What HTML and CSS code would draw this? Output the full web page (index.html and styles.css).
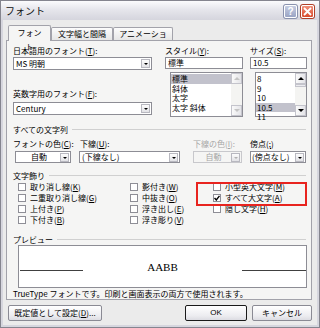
FILE: index.html
```html
<!DOCTYPE html>
<html lang="ja">
<head>
    <meta charset="UTF-8">
    <title>フォント</title>
    <link rel="stylesheet" href="styles.css">
</head>
<body>
    <div class="window">
        <!-- Title bar -->
        <div class="titlebar">
            <span class="title">フォント</span>
            <div class="caption">
                <span class="cap-btn help">?</span>
                <span class="cap-btn close">
                    <svg width="9" height="9" viewBox="0 0 9 9"><path d="M1 1L8 8M8 1L1 8" stroke="#fff" stroke-width="1.8"/></svg>
                </span>
            </div>
        </div>

        <div class="client">
            <!-- Tabs -->
            <div class="tabs">
                <div class="tab active">フォント</div>
                <div class="tab">文字幅と間隔</div>
                <div class="tab">アニメーション</div>
            </div>

            <div class="panel">
                <!-- Font / style / size -->
                <div class="top-row">
                    <div class="col-font">
                        <div class="label">日本語用のフォント(<u>T</u>):</div>
                        <div class="combo">MS 明朝<span class="drop"></span></div>
                        <div class="label label-gap">英数字用のフォント(<u>F</u>):</div>
                        <div class="combo">Century<span class="drop"></span></div>
                    </div>
                    <div class="col-style">
                        <div class="label">スタイル(<u>Y</u>):</div>
                        <div class="edit">標準</div>
                        <div class="listbox list-style">
                            <div class="items">
                                <div class="item selected">標準</div>
                                <div class="item">斜体</div>
                                <div class="item">太字</div>
                                <div class="item">太字 斜体</div>
                            </div>
                            <div class="vscroll disabled">
                                <span class="sbtn up"></span>
                                <span class="track"></span>
                                <span class="sbtn down"></span>
                            </div>
                        </div>
                    </div>
                    <div class="col-size">
                        <div class="label">サイズ(<u>S</u>):</div>
                        <div class="edit">10.5</div>
                        <div class="listbox list-size">
                            <div class="items">
                                <div class="item">8</div>
                                <div class="item">9</div>
                                <div class="item">10</div>
                                <div class="item selected">10.5</div>
                                <div class="item">11</div>
                            </div>
                            <div class="vscroll">
                                <span class="sbtn up"></span>
                                <span class="thumb"></span>
                                <span class="track"></span>
                                <span class="sbtn down"></span>
                            </div>
                        </div>
                    </div>
                </div>

                <!-- All text -->
                <div class="group-head">すべての文字列</div>
                <div class="select-row">
                    <div class="field f-color">
                        <div class="label">フォントの色(<u>C</u>):</div>
                        <div class="combo combo-color">自動<span class="drop"></span></div>
                    </div>
                    <div class="field f-under">
                        <div class="label">下線(<u>U</u>):</div>
                        <div class="combo combo-under">(下線なし)<span class="drop"></span></div>
                    </div>
                    <div class="field f-ucolor">
                        <div class="label disabled">下線の色(<u>I</u>):</div>
                        <div class="combo combo-ucolor disabled">自動<span class="drop"></span></div>
                    </div>
                    <div class="field f-emph">
                        <div class="label">傍点(<u>;</u>)</div>
                        <div class="combo combo-emph">(傍点なし)<span class="drop"></span></div>
                    </div>
                </div>

                <!-- Effects -->
                <div class="group-head">文字飾り</div>
                <div class="checks">
                    <div class="check-col col1">
                        <div class="check"><span class="box"></span>取り消し線(<u>K</u>)</div>
                        <div class="check"><span class="box"></span>二重取り消し線(<u>G</u>)</div>
                        <div class="check"><span class="box"></span>上付き(<u>P</u>)</div>
                        <div class="check"><span class="box"></span>下付き(<u>B</u>)</div>
                    </div>
                    <div class="check-col col2">
                        <div class="check"><span class="box"></span>影付き(<u>W</u>)</div>
                        <div class="check"><span class="box"></span>中抜き(<u>O</u>)</div>
                        <div class="check"><span class="box"></span>浮き出し(<u>E</u>)</div>
                        <div class="check"><span class="box"></span>浮き彫り(<u>V</u>)</div>
                    </div>
                    <div class="check-col col3">
                        <div class="check"><span class="box"></span>小型英大文字(<u>M</u>)</div>
                        <div class="check"><span class="box checked"><svg width="6" height="6" viewBox="0 0 6 6"><path d="M0.5 3L2.3 5L5.5 0.8" fill="none" stroke="#000" stroke-width="1.4"/></svg></span>すべて大文字(<u>A</u>)</div>
                        <div class="check"><span class="box"></span>隠し文字(<u>H</u>)</div>
                    </div>
                </div>

                <!-- Preview -->
                <div class="group-head">プレビュー</div>
                <div class="preview">
                    <span class="pline left"></span>
                    <span class="sample">AABB</span>
                    <span class="pline right"></span>
                </div>
                <div class="note">TrueType フォントです。印刷と画面表示の両方で使用されます。</div>

                <!-- annotation -->
                <div class="highlight"></div>
            </div>

            <!-- Buttons -->
            <div class="buttons">
                <div class="btn btn-default-set">既定値として設定(<u>D</u>)...</div>
                <div class="spacer"></div>
                <div class="btn btn-ok">OK</div>
                <div class="btn btn-cancel">キャンセル</div>
            </div>
        </div>
    </div>
</body>
</html>
```

FILE: styles.css
```css
* {
    margin: 0;
    padding: 0;
    box-sizing: border-box;
}

body {
    width: 320px;
    height: 328px;
    overflow: hidden;
    background: #fff;
    font-family: "Noto Sans CJK JP", "Liberation Sans", sans-serif;
    font-size: 8px;
    color: #000;
}

u {
    text-decoration: underline;
    text-underline-offset: 1px;
}

.window {
    width: 320px;
    height: 328px;
    border: 1px solid #85858f;
    background: #ebebeb;
    display: flex;
    flex-direction: column;
}

/* Title bar */
.titlebar {
    height: 19px;
    background: linear-gradient(#fbfbfd, #e6e6ec 45%, #d5d5dd);
    display: flex;
    align-items: center;
    justify-content: space-between;
    padding: 0 5px 0 4px;
}

.title {
    font-size: 10px;
    line-height: 12px;
    color: #111;
}

.caption {
    display: flex;
    gap: 4px;
    margin-top: 2px;
}

.cap-btn {
    width: 13px;
    height: 13px;
    border: 1px solid #fff;
    border-radius: 2px;
    display: flex;
    align-items: center;
    justify-content: center;
    color: #fff;
    font-family: "Liberation Sans", sans-serif;
    font-weight: bold;
    font-size: 10px;
    line-height: 10px;
}

.help {
    background: linear-gradient(#c6cde2, #9aa4c4);
    box-shadow: 0 0 0 1px #8a92ae;
}

.close {
    background: linear-gradient(#f0907a, #d94a2c);
    box-shadow: 0 0 0 1px #b04028;
}

/* Client area */
.client {
    flex: 1;
    border: 2px solid #d6d6de;
    border-top: none;
    padding: 5px 0 0 3px;
}

.tabs {
    display: flex;
    align-items: flex-end;
    height: 15px;
    padding-left: 2px;
}

.tab {
    height: 13px;
    line-height: 12px;
    border: 1px solid #a2a2aa;
    border-bottom: none;
    border-radius: 2px 2px 0 0;
    background: linear-gradient(#fcfcfc, #e6e6e6);
    padding: 0 5px;
    text-align: center;
}

.tab.active {
    width: 43px;
    height: 16px;
    line-height: 14px;
    background: #f5f5f4;
    margin-bottom: -1px;
    position: relative;
    z-index: 1;
}

.tab:nth-child(2) {
    width: 62px;
}

.tab:nth-child(3) {
    width: 60px;
}

.panel {
    position: relative;
    width: 306px;
    height: 260px;
    border: 1px solid #a2a2aa;
    background: #f5f5f4;
    padding: 4px 0 0 6px;
}

.label {
    height: 12px;
    line-height: 12px;
    white-space: nowrap;
}

.label.disabled {
    color: #a6a6a6;
}

/* Top row */
.top-row {
    display: flex;
    height: 73px;
}

.col-font {
    width: 139px;
}

.col-style {
    width: 78px;
    margin-left: 13px;
}

.col-size {
    width: 57px;
    margin-left: 7px;
}

.label-gap {
    margin-top: 18px;
}

.combo {
    position: relative;
    height: 13px;
    line-height: 11px;
    border: 1px solid #8d8d95;
    background: #fff;
    padding-left: 2px;
    white-space: nowrap;
    overflow: hidden;
}

.col-font .label-gap + .combo {
    margin-top: 2px;
}

.drop {
    position: absolute;
    right: 1px;
    top: 1px;
    width: 9px;
    height: 9px;
    background: linear-gradient(#fdfdfd, #e2e2e6);
    border: 1px solid #b8b8c0;
}

.drop::after {
    content: "";
    position: absolute;
    left: 2px;
    top: 3px;
    border-left: 2px solid transparent;
    border-right: 2px solid transparent;
    border-top: 2px solid #000;
}

.edit {
    height: 12px;
    line-height: 10px;
    border: 1px solid #8d8d95;
    background: #fff;
    padding-left: 2px;
}

.listbox {
    display: flex;
    height: 45px;
    margin-top: 3px;
    border: 1px solid #8d8d95;
    background: #fff;
}

.list-style {
    margin-left: 5px;
}

.list-size {
    margin-left: 5px;
}

.items {
    flex: 1;
    padding-top: 1px;
}

.item {
    height: 9.5px;
    line-height: 9px;
    padding-left: 1px;
    white-space: nowrap;
}

.item.selected {
    background: #c2c2cc;
}

.vscroll {
    width: 11px;
    display: flex;
    flex-direction: column;
    background: #f4f4f2;
}

.sbtn {
    position: relative;
    height: 11px;
    background: linear-gradient(90deg, #fafafa, #e4e4e8);
    border: 1px solid #c4c4cc;
}

.sbtn::after {
    content: "";
    position: absolute;
    left: 2px;
    top: 3px;
    border-left: 3px solid transparent;
    border-right: 3px solid transparent;
}

.sbtn.up::after {
    border-bottom: 3px solid #000;
}

.sbtn.down::after {
    border-top: 3px solid #000;
}

.vscroll.disabled .sbtn.up::after {
    border-bottom-color: #c4c4c4;
}

.vscroll.disabled .sbtn.down::after {
    border-top-color: #c4c4c4;
}

.thumb {
    height: 3px;
    border: 1px solid #c4c4cc;
    background: #ececf0;
}

.track {
    flex: 1;
}

/* Group headings */
.group-head {
    display: flex;
    align-items: center;
    height: 11px;
    line-height: 11px;
    width: 293px;
    margin-top: 6px;
}

.group-head::after {
    content: "";
    flex: 1;
    height: 1px;
    margin-left: 4px;
    background: #d0d0d0;
}

/* Selects row */
.select-row {
    display: flex;
    margin-top: 3px;
}

.field .combo {
    margin-top: 1px;
    height: 12px;
    line-height: 10px;
}

.f-color {
    width: 66px;
}

.combo-color {
    width: 56px;
    margin-left: 2px;
    text-align: center;
    padding-right: 10px;
}

.f-under {
    width: 114px;
}

.f-under .label {
    padding-left: 1px;
}

.combo-under {
    width: 101px;
}

.f-ucolor {
    width: 57px;
}

.combo-ucolor {
    width: 49px;
    text-align: center;
    padding-right: 10px;
}

.combo.disabled {
    background: #f5f5f4;
    border-color: #c8c8cc;
    color: #a6a6a6;
}

.combo.disabled .drop::after {
    border-top-color: #b0b0b0;
}

.f-emph {
    width: 57px;
}

.combo-emph {
    width: 56px;
    padding-left: 1px;
}

/* Checkboxes */
.checks {
    display: flex;
    padding-left: 5px;
    margin-top: 0;
}

.col1 {
    width: 112px;
}

.col2 {
    width: 83px;
}

.check {
    display: flex;
    align-items: center;
    height: 11px;
    white-space: nowrap;
}

.box {
    width: 8px;
    height: 8px;
    margin-right: 4px;
    border: 1px solid #8e8e96;
    background: #fff;
    display: flex;
    align-items: center;
    justify-content: center;
}

.checks + .group-head {
    margin-top: 9px;
}

.select-row + .group-head {
    margin-top: 7px;
}

/* Preview */
.preview {
    display: flex;
    align-items: center;
    justify-content: space-between;
    width: 289px;
    height: 43px;
    margin-left: 5px;
    border: 1px solid #8d8d95;
    background: #fff;
}

.pline {
    height: 1px;
    margin-top: 7px;
    background: #404040;
}

.pline.left {
    width: 63px;
    margin-left: 1px;
}

.pline.right {
    width: 64px;
}

.sample {
    font-family: "Liberation Serif", serif;
    font-size: 11px;
}

.note {
    height: 10px;
    line-height: 10px;
    margin-top: 1px;
    white-space: nowrap;
}

.highlight {
    position: absolute;
    left: 189px;
    top: 141px;
    width: 111px;
    height: 24px;
    border: 2px solid #e8241f;
}

/* Buttons */
.buttons {
    display: flex;
    margin-top: 5px;
    width: 306px;
}

.spacer {
    flex: 1;
}

.btn {
    height: 16px;
    line-height: 14px;
    text-align: center;
    border: 1px solid #8a8a94;
    border-radius: 2px;
    background: linear-gradient(#ffffff, #ececf0 70%, #dcdce2);
    white-space: nowrap;
}

.btn-default-set {
    width: 94px;
    margin-left: 2px;
}

.btn-ok {
    width: 62px;
    border-color: #1a1a1a;
    font-family: "Liberation Sans", sans-serif;
}

.btn-cancel {
    width: 60px;
    margin-left: 5px;
}
```
